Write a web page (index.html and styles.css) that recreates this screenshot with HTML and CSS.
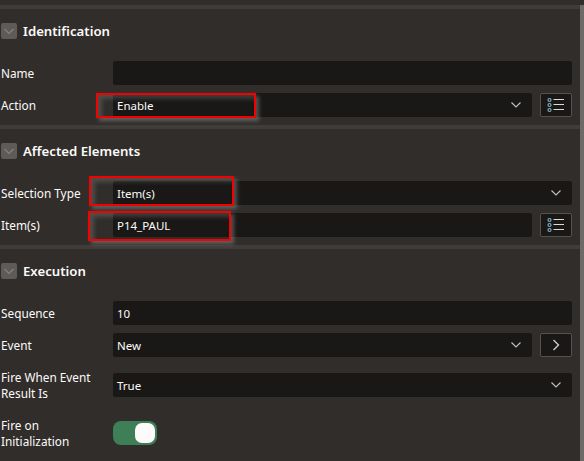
FILE: index.html
```html
<!DOCTYPE html>
<html lang="en">

<head>
<meta charset="UTF-8">
<meta name="viewport" content="width=device-width, initial-scale=1.0">
<link rel="stylesheet" href="styles.css">
</head>

<body>
<div class="page">
	<div class="panel">

		<section class="section">
			<header class="section-head">
				<span class="toggle"><svg viewBox="0 0 16 16" width="16" height="16"><path d="M3.5 6 8 10.5 12.5 6" /></svg></span>
				<h2 class="section-title">Identification</h2>
			</header>
			<div class="row">
				<label class="label">Name</label>
				<div class="field"></div>
			</div>
			<div class="row">
				<label class="label">Action</label>
				<div class="field">Enable<svg class="chevron" viewBox="0 0 10 6" width="10" height="6"><path d="M.5.5 5 5 9.500.5" /></svg></div>
				<button class="side-btn"><svg viewBox="0 0 18 16" width="18" height="16"><circle cx="2.5" cy="3" r="1.5" /><circle cx="2.5" cy="8" r="1.5" /><circle cx="2.5" cy="13" r="1.5" /><path d="M6.500 2.500H17M6.500 7.500H17M6.500 12.500H17" /></svg></button>
				<span class="mark mark-action"></span>
			</div>
		</section>

		<section class="section">
			<header class="section-head">
				<span class="toggle"><svg viewBox="0 0 16 16" width="16" height="16"><path d="M3.5 6 8 10.5 12.5 6" /></svg></span>
				<h2 class="section-title">Affected Elements</h2>
			</header>
			<div class="row">
				<label class="label">Selection Type</label>
				<div class="field">Item(s)<svg class="chevron" viewBox="0 0 10 6" width="10" height="6"><path d="M.5.5 5 5 9.500.5" /></svg></div>
				<span class="mark mark-type"></span>
			</div>
			<div class="row">
				<label class="label">Item(s)</label>
				<div class="field">P14_PAUL</div>
				<button class="side-btn"><svg viewBox="0 0 18 16" width="18" height="16"><circle cx="2.5" cy="3" r="1.5" /><circle cx="2.5" cy="8" r="1.5" /><circle cx="2.5" cy="13" r="1.5" /><path d="M6.500 2.500H17M6.500 7.500H17M6.500 12.500H17" /></svg></button>
				<span class="mark mark-items"></span>
			</div>
		</section>

		<section class="section section-last">
			<header class="section-head">
				<span class="toggle"><svg viewBox="0 0 16 16" width="16" height="16"><path d="M3.5 6 8 10.5 12.5 6" /></svg></span>
				<h2 class="section-title">Execution</h2>
			</header>
			<div class="row">
				<label class="label">Sequence</label>
				<div class="field">10</div>
			</div>
			<div class="row">
				<label class="label">Event</label>
				<div class="field">New<svg class="chevron" viewBox="0 0 10 6" width="10" height="6"><path d="M.5.5 5 5 9.500.5" /></svg></div>
				<button class="side-btn"><svg viewBox="0 0 8 12" width="8" height="12"><path class="arrow" d="M1.500 1 6.500 6 1.500 11" /></svg></button>
			</div>
			<div class="row row-tall">
				<label class="label">Fire When Event Result Is</label>
				<div class="field">True<svg class="chevron" viewBox="0 0 10 6" width="10" height="6"><path d="M.5.5 5 5 9.500.5" /></svg></div>
			</div>
			<div class="row row-tall row-switch">
				<label class="label">Fire on Initialization</label>
				<span class="switch"><span class="knob"></span></span>
			</div>
		</section>

	</div>
	<div class="scrollbar"></div>
</div>
</body>

</html>
```

FILE: styles.css
```css
body {
	margin: 0;
	background-color: #312d2a;
	color: #fcfbfa;
	font-family: "Noto Sans", "Open Sans", Arial, sans-serif;
	font-size: 11.5px;
}

.page {
	display: flex;
	height: 461px;
	overflow: hidden;
}

.panel {
	flex: 1;
	padding-top: 5px;
}

.scrollbar {
	width: 4px;
	margin-top: 5px;
	background-color: #6d6a68;
}

.section {
	display: flex;
	flex-direction: column;
	gap: 8px;
	padding: 0 8px 8px 1px;
	border-top: 4px solid #403c39;
}

.section-last {
	padding-bottom: 0;
}

.section-head {
	display: flex;
	align-items: center;
	gap: 6px;
	height: 16px;
	margin: 14px 0 14px;
}

.toggle {
	display: block;
	width: 16px;
	height: 16px;
	border-radius: 2px;
	background-color: #5f5b58;
}

.toggle svg {
	display: block;
	fill: none;
	stroke: #858280;
	stroke-width: 1.1;
}

.section-title {
	margin: 0;
	font-size: 13.2px;
	font-weight: 600;
}

.row {
	position: relative;
	display: flex;
	align-items: center;
	gap: 8px;
	min-height: 24px;
}

.row-tall {
	min-height: 32px;
	margin-top: 4px;
}

.row-switch {
	margin-top: 8px;
}

.label {
	flex: none;
	width: 104px;
	font-size: 11.8px;
	line-height: 16px;
}

.field {
	flex: 1;
	display: flex;
	align-items: center;
	justify-content: space-between;
	height: 24px;
	padding: 0 11px 0 4px;
	border-radius: 2px;
	background-color: #1a1816;
}

.chevron {
	fill: none;
	stroke: #c4c1bf;
	stroke-width: 1.1;
}

.side-btn {
	flex: none;
	display: flex;
	align-items: center;
	justify-content: center;
	width: 32px;
	height: 24px;
	padding: 0;
	border: 1px solid #55514e;
	border-radius: 2px;
	background-color: #1a1816;
}

.side-btn circle {
	fill: #1a1816;
	stroke: #7fb0c4;
	stroke-width: 1.2;
}

.side-btn path {
	fill: none;
	stroke: #dcdad8;
	stroke-width: 1;
}

.side-btn .arrow {
	stroke: #c9cdd2;
	stroke-width: 1.4;
}

.switch {
	display: flex;
	justify-content: flex-end;
	box-sizing: border-box;
	width: 44px;
	height: 24px;
	padding: 2px;
	border-radius: 8px;
	background-color: #3f7f58;
}

.knob {
	display: block;
	width: 20px;
	height: 20px;
	border-radius: 7px;
	background-color: #fcfbfa;
}

.mark {
	position: absolute;
	border: 2.5px solid #f40000;
	box-shadow: 3px 3px 4px rgba(170, 170, 170, 0.4), inset 4px 4px 4px rgba(170, 170, 170, 0.25);
	pointer-events: none;
}

.mark-action {
	left: 95px;
	top: 0;
	width: 156px;
	height: 21px;
}

.mark-type {
	left: 88px;
	top: -5px;
	width: 141px;
	height: 26px;
}

.mark-items {
	left: 87px;
	top: -2px;
	width: 139px;
	height: 26px;
}
```
